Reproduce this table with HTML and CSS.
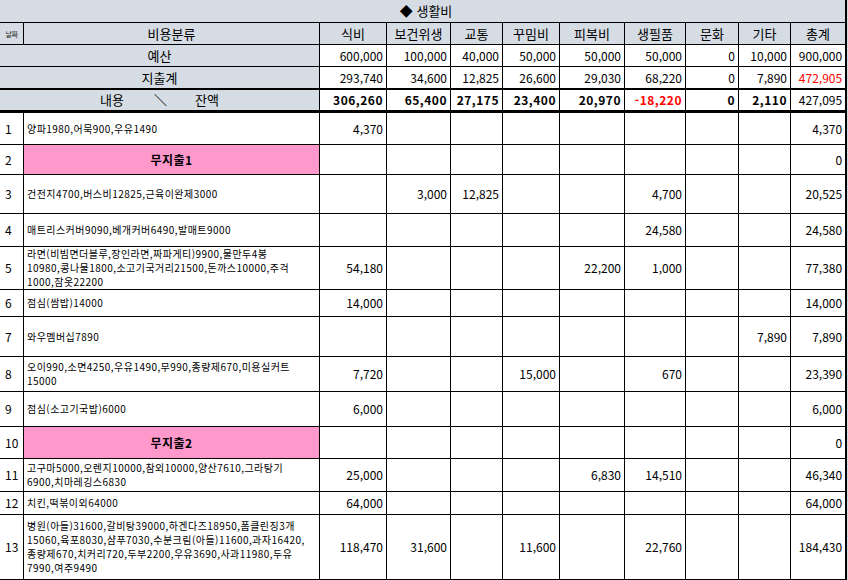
FILE: index.html
```html
<!DOCTYPE html>
<html lang="ko">
<head>
<meta charset="utf-8">
<title>생활비</title>
<link rel="stylesheet" href="styles.css">
</head>
<body>
<table class="sheet">
  <colgroup>
    <col class="w-date"><col class="w-desc"><col class="w-67"><col class="w-64"><col class="w-52"><col class="w-57"><col class="w-65"><col class="w-61"><col class="w-53"><col class="w-52"><col class="w-56">
  </colgroup>
  <tr class="h-23">
    <td colspan="11" class="title last">◆ 생활비</td>
  </tr>
  <tr class="h-22">
    <td class="head date-head">날짜</td>
    <td class="head">비용분류</td>
    <td class="head">식비</td>
    <td class="head">보건위생</td>
    <td class="head">교통</td>
    <td class="head">꾸밈비</td>
    <td class="head">피복비</td>
    <td class="head">생필품</td>
    <td class="head">문화</td>
    <td class="head">기타</td>
    <td class="head last">총계</td>
  </tr>
  <tr class="h-22">
    <td colspan="2" class="label">예산</td>
    <td class="num">600,000</td>
    <td class="num">100,000</td>
    <td class="num">40,000</td>
    <td class="num">50,000</td>
    <td class="num">50,000</td>
    <td class="num">50,000</td>
    <td class="num">0</td>
    <td class="num">10,000</td>
    <td class="num last">900,000</td>
  </tr>
  <tr class="h-23 spent">
    <td colspan="2" class="label">지출계</td>
    <td class="num">293,740</td>
    <td class="num">34,600</td>
    <td class="num">12,825</td>
    <td class="num">26,600</td>
    <td class="num">29,030</td>
    <td class="num">68,220</td>
    <td class="num">0</td>
    <td class="num">7,890</td>
    <td class="num last red">472,905</td>
  </tr>
  <tr class="h-23 balance">
    <td colspan="2" class="label"><span>내용</span><span class="slash">＼</span><span>잔액</span></td>
    <td class="num bold">306,260</td>
    <td class="num bold">65,400</td>
    <td class="num bold">27,175</td>
    <td class="num bold">23,400</td>
    <td class="num bold">20,970</td>
    <td class="num bold red">-18,220</td>
    <td class="num bold">0</td>
    <td class="num bold">2,110</td>
    <td class="num last">427,095</td>
  </tr>
  <tr class="h-32">
    <td class="no">1</td><td class="desc">양파1980,어묵900,우유1490</td>
    <td class="num">4,370</td><td class="num"></td><td class="num"></td><td class="num"></td><td class="num"></td><td class="num"></td><td class="num"></td><td class="num"></td><td class="num last">4,370</td>
  </tr>
  <tr class="h-30">
    <td class="no">2</td><td class="desc pink">무지출1</td>
    <td class="num"></td><td class="num"></td><td class="num"></td><td class="num"></td><td class="num"></td><td class="num"></td><td class="num"></td><td class="num"></td><td class="num last">0</td>
  </tr>
  <tr class="h-39">
    <td class="no">3</td><td class="desc">건전지4700,버스비12825,근육이완제3000</td>
    <td class="num"></td><td class="num">3,000</td><td class="num">12,825</td><td class="num"></td><td class="num"></td><td class="num">4,700</td><td class="num"></td><td class="num"></td><td class="num last">20,525</td>
  </tr>
  <tr class="h-33">
    <td class="no">4</td><td class="desc">매트리스커버9090,베개커버6490,발매트9000</td>
    <td class="num"></td><td class="num"></td><td class="num"></td><td class="num"></td><td class="num"></td><td class="num">24,580</td><td class="num"></td><td class="num"></td><td class="num last">24,580</td>
  </tr>
  <tr class="h-43">
    <td class="no">5</td><td class="desc">라면(비빔면더블루,장인라면,짜파게티)9900,물만두4봉<br>10980,콩나물1800,소고기국거리21500,돈까스10000,주걱<br>1000,잠옷22200</td>
    <td class="num">54,180</td><td class="num"></td><td class="num"></td><td class="num"></td><td class="num">22,200</td><td class="num">1,000</td><td class="num"></td><td class="num"></td><td class="num last">77,380</td>
  </tr>
  <tr class="h-27">
    <td class="no">6</td><td class="desc">점심(쌈밥)14000</td>
    <td class="num">14,000</td><td class="num"></td><td class="num"></td><td class="num"></td><td class="num"></td><td class="num"></td><td class="num"></td><td class="num"></td><td class="num last">14,000</td>
  </tr>
  <tr class="h-40">
    <td class="no">7</td><td class="desc">와우멤버십7890</td>
    <td class="num"></td><td class="num"></td><td class="num"></td><td class="num"></td><td class="num"></td><td class="num"></td><td class="num"></td><td class="num">7,890</td><td class="num last">7,890</td>
  </tr>
  <tr class="h-35">
    <td class="no">8</td><td class="desc">오이990,소면4250,우유1490,무990,종량제670,미용실커트<br>15000</td>
    <td class="num">7,720</td><td class="num"></td><td class="num"></td><td class="num">15,000</td><td class="num"></td><td class="num">670</td><td class="num"></td><td class="num"></td><td class="num last">23,390</td>
  </tr>
  <tr class="h-35">
    <td class="no">9</td><td class="desc">점심(소고기국밥)6000</td>
    <td class="num">6,000</td><td class="num"></td><td class="num"></td><td class="num"></td><td class="num"></td><td class="num"></td><td class="num"></td><td class="num"></td><td class="num last">6,000</td>
  </tr>
  <tr class="h-32">
    <td class="no">10</td><td class="desc pink">무지출2</td>
    <td class="num"></td><td class="num"></td><td class="num"></td><td class="num"></td><td class="num"></td><td class="num"></td><td class="num"></td><td class="num"></td><td class="num last">0</td>
  </tr>
  <tr class="h-33">
    <td class="no">11</td><td class="desc">고구마5000,오렌지10000,참외10000,양산7610,그라탕기<br>6900,치마레깅스6830</td>
    <td class="num">25,000</td><td class="num"></td><td class="num"></td><td class="num"></td><td class="num">6,830</td><td class="num">14,510</td><td class="num"></td><td class="num"></td><td class="num last">46,340</td>
  </tr>
  <tr class="h-23">
    <td class="no">12</td><td class="desc">치킨,떡볶이외64000</td>
    <td class="num">64,000</td><td class="num"></td><td class="num"></td><td class="num"></td><td class="num"></td><td class="num"></td><td class="num"></td><td class="num"></td><td class="num last">64,000</td>
  </tr>
  <tr class="h-65">
    <td class="no">13</td><td class="desc">병원(아들)31600,갈비탕39000,하겐다즈18950,폼클린징3개<br>15060,육포8030,샴푸7030,수분크림(아들)11600,과자16420,<br>종량제670,치커리720,두부2200,우유3690,사과11980,두유<br>7990,여주9490</td>
    <td class="num">118,470</td><td class="num">31,600</td><td class="num"></td><td class="num">11,600</td><td class="num"></td><td class="num">22,760</td><td class="num"></td><td class="num"></td><td class="num last">184,430</td>
  </tr>
</table>
</body>
</html>
```

FILE: styles.css
```css
html, body {
  margin: 0;
  padding: 0;
}
body {
  background: #d6dce4;
  font-family: "Noto Sans CJK KR", "Noto Sans", sans-serif;
  color: #000;
  width: 848px;
  height: 580px;
  overflow: hidden;
}
.sheet {
  border-collapse: separate;
  border-spacing: 0;
  table-layout: fixed;
  width: 847px;
}
.w-date { width: 24px; }
.w-desc { width: 296px; }
.w-67 { width: 67px; }
.w-64 { width: 64px; }
.w-52 { width: 52px; }
.w-57 { width: 57px; }
.w-65 { width: 65px; }
.w-61 { width: 61px; }
.w-53 { width: 53px; }
.w-56 { width: 56px; }

.h-22 { height: 22px; }
.h-23 { height: 23px; }
.h-27 { height: 27px; }
.h-30 { height: 30px; }
.h-32 { height: 32px; }
.h-33 { height: 33px; }
.h-35 { height: 35px; }
.h-39 { height: 39px; }
.h-40 { height: 40px; }
.h-43 { height: 43px; }
.h-65 { height: 65px; }

.sheet td {
  box-sizing: border-box;
  border-right: 1px solid #000;
  border-bottom: 1px solid #000;
  padding: 0 3px;
  vertical-align: middle;
  background: #fff;
  font-size: 12px;
  line-height: 14px;
  white-space: nowrap;
  overflow: hidden;
}
.sheet td.last {
  border-right-width: 2px;
}
.sheet td.title {
  background: #d6dce4;
  text-align: center;
  font-size: 13px;
  padding-left: 10px;
}
.sheet td.head {
  background: #d6dce4;
  text-align: center;
  font-size: 13px;
}
.sheet td.date-head {
  font-size: 7px;
  letter-spacing: -0.5px;
  padding: 0;
  color: #222;
}
.sheet td.label {
  background: #d6dce4;
  text-align: center;
  font-size: 13px;
}
.label .slash {
  margin: 0 28px 0 30px;
}
.sheet td.num {
  text-align: right;
  padding-right: 3px;
  padding-left: 0;
}
.sheet td.bold {
  font-weight: 700;
  font-size: 12px;
  letter-spacing: 0.5px;
}
.sheet td.red {
  color: #ff0000;
}
.spent td {
  border-bottom-width: 2px;
}
.balance td {
  border-bottom-width: 3px;
}
.sheet td.no {
  padding-left: 5px;
  font-size: 12px;
}
.sheet td.desc {
  font-size: 10px;
  letter-spacing: 0.45px;
  line-height: 14px;
  padding-left: 3px;
}
.sheet td.pink {
  background: #ff99cc;
  text-align: center;
  font-weight: 700;
  font-size: 12px;
  letter-spacing: 0.5px;
}
```
